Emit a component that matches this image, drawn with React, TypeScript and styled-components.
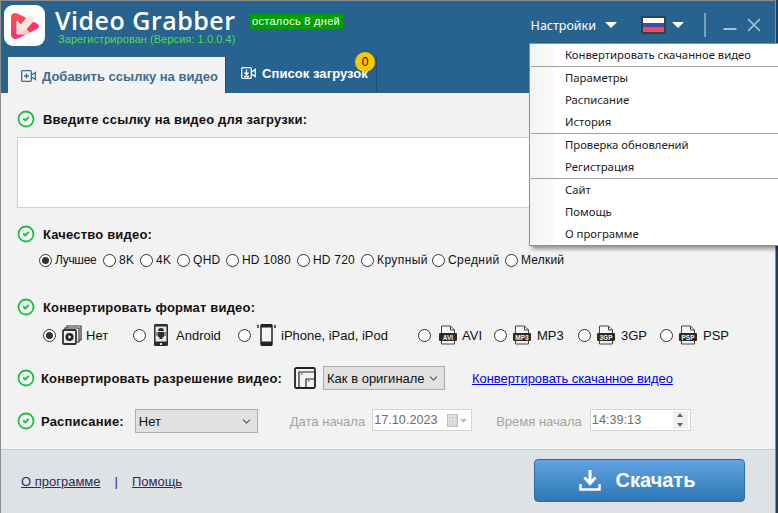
import styled, { createGlobalStyle } from 'styled-components';
import { CircleCheck, ChevronDown, Minus, X } from 'lucide-react';

const GlobalStyle = createGlobalStyle`
  html, body {
    margin: 0;
    padding: 0;
    background: #1d3f5e;
    overflow: hidden;
  }
  * {
    box-sizing: border-box;
  }
`;

const Window = styled.div`
  position: relative;
  width: 776px;
  height: 513px;
  display: flex;
  flex-direction: column;
  border-left: 1px solid #8c8c8c;
  border-right: 1px solid #8c8c8c;
  border-top: 1px solid #8c8c8c;
  font-family: "Liberation Sans", Arial, sans-serif;
  font-size: 13px;
  color: #111;
`;

const Header = styled.header`
  height: 92px;
  background: #27638e;
  display: flex;
  flex-direction: column;
`;

const TitleBar = styled.div`
  height: 56px;
  display: flex;
  padding-left: 3px;
`;

const LogoBox = styled.div`
  width: 41px;
  height: 41px;
  margin-top: 4px;
  background: #fff;
  border-radius: 9px;
  display: flex;
  align-items: center;
  justify-content: center;
`;

const Brand = styled.div`
  margin-left: 10px;
  display: flex;
  flex-direction: column;
`;

const BrandTop = styled.div`
  display: flex;
  align-items: flex-start;
`;

const AppName = styled.div`
  font-family: "Open Sans", sans-serif;
  font-weight: 600;
  font-size: 25px;
  line-height: 26px;
  height: 26px;
  margin-top: 6px;
  color: #fff;
  letter-spacing: 0.5px;
`;

const Trial = styled.div`
  margin: 13px 0 0 14px;
  height: 15px;
  width: 93px;
  background: #00a000;
  color: #fff;
  font-size: 11px;
  line-height: 15px;
  letter-spacing: 0.3px;
  text-align: center;
  white-space: nowrap;
`;

const Registered = styled.div`
  margin-left: 3px;
  font-size: 11px;
  line-height: 13px;
  color: #4fdc55;
  letter-spacing: 0.06px;
  white-space: nowrap;
`;

const WindowControls = styled.div`
  margin-left: auto;
  padding-right: 10px;
  display: flex;
  align-items: center;
  height: 48px;
  color: #fff;
`;

const SettingsLabel = styled.span`
  font-family: "Noto Sans", sans-serif;
  font-size: 12.5px;
`;

const Caret = styled.span<{ $gap: number }>`
  margin-left: ${(p) => p.$gap}px;
  width: 0;
  height: 0;
  border-left: 6px solid transparent;
  border-right: 6px solid transparent;
  border-top: 6px solid #fff;
`;

const Flag = styled.div`
  margin-left: 24px;
  width: 25px;
  height: 18px;
  border: 2px solid #33404a;
  background: linear-gradient(#fff 0 33%, #3f4ea5 33% 66%, #f4495a 66% 100%);
`;

const Divider = styled.div`
  margin: 0 14px 0 20px;
  width: 2px;
  height: 24px;
  background: #7ba3bf;
`;

const ControlIcon = styled.span<{ $gap: number; $drop: number }>`
  display: flex;
  color: #a9c4d7;
  margin-right: ${(p) => p.$gap}px;
  margin-top: ${(p) => p.$drop}px;
`;

const TabStrip = styled.div`
  height: 36px;
  padding-left: 7px;
  display: flex;
`;

const ActiveTab = styled.div`
  width: 218px;
  background: #f2f2f2;
  color: #3d6c8f;
  font-weight: 700;
  font-size: 13px;
  display: flex;
  align-items: center;
  padding: 2px 0 0 13px;
  gap: 6px;
  border-right: 1px solid #1e4f74;
  white-space: nowrap;
`;

const Tab = styled.div`
  position: relative;
  width: 151px;
  height: 36px;
  color: #fff;
  font-weight: 700;
  font-size: 13px;
  letter-spacing: 0.07px;
  display: flex;
  align-items: center;
  padding: 0 0 4px 15px;
  gap: 6px;
  border-right: 1px solid #1e4f74;
  white-space: nowrap;
`;

const CountBadge = styled.span`
  position: absolute;
  left: 129px;
  top: -5px;
  width: 20px;
  height: 20px;
  border-radius: 50%;
  background: #fdc704;
  color: #111;
  font-size: 12px;
  font-weight: 400;
  line-height: 20px;
  text-align: center;
`;

const Content = styled.main`
  flex: 1;
  background: #f2f2f2;
  padding: 16px 15px 0 16px;
  display: flex;
  flex-direction: column;
`;

const Heading = styled.div<{ $mt?: number }>`
  height: 20px;
  margin-top: ${(p) => p.$mt ?? 0}px;
  display: flex;
  align-items: center;
  gap: 8px;
  font-size: 13px;
  font-weight: 700;
  letter-spacing: 0.18px;
  color: #111;
`;

const CheckIcon = styled(CircleCheck)`
  flex: none;
  color: #1fbf3f;
`;

const LinkBox = styled.div`
  margin-top: 8px;
  height: 71px;
  background: #fff;
  border: 1px solid #cfcfcf;
`;

const QualityRow = styled.div`
  margin: 8px 0 0 22px;
  height: 16px;
  display: flex;
  align-items: center;
  font-size: 12px;
`;

const RadioLabel = styled.label<{ $w: number; $spacing: number }>`
  flex: none;
  width: ${(p) => p.$w}px;
  display: flex;
  align-items: center;
  gap: 3px;
  letter-spacing: ${(p) => p.$spacing}px;
  white-space: nowrap;
`;

const Radio = styled.span<{ $on?: boolean }>`
  flex: none;
  width: 13px;
  height: 13px;
  border-radius: 50%;
  border: 1px solid #333;
  background: #fff;
  display: flex;
  align-items: center;
  justify-content: center;
  &::after {
    content: '';
    width: 7px;
    height: 7px;
    border-radius: 50%;
    background: ${(p) => (p.$on ? '#333' : 'transparent')};
  }
`;

const FormatRow = styled.div`
  margin: 6px 0 0 26px;
  height: 24px;
  display: flex;
  align-items: center;
`;

const FormatOption = styled.label<{ $w: number }>`
  width: ${(p) => p.$w}px;
  flex: none;
  display: flex;
  align-items: center;
  white-space: nowrap;
`;

const FormatIcon = styled.span<{ $ml: number; $mr: number }>`
  display: flex;
  margin-left: ${(p) => p.$ml}px;
  margin-right: ${(p) => p.$mr}px;
`;

const Row = styled.div<{ $mt: number }>`
  margin-top: ${(p) => p.$mt}px;
  height: 24px;
  display: flex;
  align-items: center;
`;

const RowLabel = styled.span`
  margin-left: 6px;
  font-size: 13px;
  font-weight: 700;
  letter-spacing: 0.18px;
  white-space: nowrap;
`;

const SelectBox = styled.div<{ $w: number; $ml: number }>`
  width: ${(p) => p.$w}px;
  margin-left: ${(p) => p.$ml}px;
  height: 24px;
  background: #e1e1e1;
  border: 1px solid #adadad;
  padding: 0 4px 0 3px;
  display: flex;
  align-items: center;
  justify-content: space-between;
  white-space: nowrap;
`;

const BlueLink = styled.a`
  margin-left: 27px;
  color: #0000ee;
  text-decoration: underline;
  letter-spacing: -0.06px;
  white-space: nowrap;
`;

const MutedLabel = styled.span<{ $ml: number }>`
  margin-left: ${(p) => p.$ml}px;
  color: #a3a3a3;
  white-space: nowrap;
`;

const DisabledField = styled.div<{ $w: number; $ml: number }>`
  width: ${(p) => p.$w}px;
  margin-left: ${(p) => p.$ml}px;
  height: 22px;
  margin-bottom: 2px;
  background: #fff;
  border: 1px solid #d4d4d4;
  color: #6d6d6d;
  padding: 0 2px 0 1px;
  font-size: 12.7px;
  display: flex;
  align-items: center;
  justify-content: space-between;
`;

const Spinner = styled.div`
  width: 15px;
  height: 18px;
  display: flex;
  flex-direction: column;
  justify-content: space-between;
  background: #f0f0f0;
`;

const SpinArrow = styled.span<{ $up?: boolean }>`
  align-self: center;
  margin: 2px 0;
  width: 0;
  height: 0;
  border-left: 3px solid transparent;
  border-right: 3px solid transparent;
  ${(p) => (p.$up ? 'border-bottom: 4px solid #666;' : 'border-top: 4px solid #666;')}
`;

const Footer = styled.footer`
  height: 64px;
  background: #dfe2e5;
  border-top: 1px solid #c9c9c9;
  padding-left: 20px;
  display: flex;
  align-items: center;
  color: #2d2a55;
`;

const FooterLink = styled.a`
  color: #2d2a55;
  text-decoration: underline;
`;

const FooterSep = styled.span`
  margin: 0 14px;
`;

const DownloadButton = styled.button`
  margin-left: auto;
  margin-right: 30px;
  width: 211px;
  height: 43px;
  margin-top: -3px;
  padding: 0 5px 0 0;
  border: 1px solid #2a6ca6;
  border-radius: 4px;
  background: linear-gradient(#63a3e2, #2d78b5);
  color: #fff;
  font-family: "Liberation Sans", Arial, sans-serif;
  font-size: 20px;
  font-weight: 700;
  display: flex;
  align-items: center;
  justify-content: center;
  gap: 15px;
`;

const Menu = styled.div`
  position: absolute;
  left: 528px;
  top: 42px;
  width: 249px;
  background: linear-gradient(90deg, #f3f3f3 0, #fbfbfb 24px, #fff 25px);
  border: 1px solid #8f8f8f;
  border-right: none;
  box-shadow: 3px 3px 4px rgba(0, 0, 0, 0.4);
  font-family: "Noto Sans", sans-serif;
  font-size: 11.3px;
  color: #1b1b1b;
`;

const MenuItem = styled.div`
  height: 22px;
  line-height: 22px;
  padding-left: 35px;
  white-space: nowrap;
`;

const MenuSeparator = styled.div`
  height: 1px;
  margin-left: 1px;
  background: #a0a0a0;
`;

const qualities = [
  { label: 'Лучшее', width: 64, spacing: -0.3 },
  { label: '8K', width: 37, spacing: 0.3 },
  { label: '4K', width: 37, spacing: 0.3 },
  { label: 'QHD', width: 49, spacing: 0.3 },
  { label: 'HD 1080', width: 71, spacing: 0.2 },
  { label: 'HD 720', width: 64, spacing: 0.2 },
  { label: 'Крупный', width: 71, spacing: 0.4 },
  { label: 'Средний', width: 73, spacing: 0.4 },
  { label: 'Мелкий', width: 70, spacing: 0.2 },
];

const menuGroups = [
  ['Конвертировать скачанное видео'],
  ['Параметры', 'Расписание', 'История'],
  ['Проверка обновлений', 'Регистрация'],
  ['Сайт', 'Помощь', 'О программе'],
];

function Logo() {
  return (
    <svg width="28" height="27" viewBox="0 0 28 27">
      <defs>
        <linearGradient id="logoFill" x1="0" y1="0" x2="0.4" y2="1">
          <stop offset="0" stopColor="#f8584a" />
          <stop offset="1" stopColor="#fb2a7a" />
        </linearGradient>
      </defs>
      <path
        d="M0 5C0 1.500 3.500 0 6.500 1.500L26 11.500C28.700 13.200 28.700 15.500 26 17L7 26.500C3.500 28 0 26 0 22.500Z"
        fill="url(#logoFill)"
      />
      <path d="M6 9v13h13l-4-5 9-10-5-5-9 11z" fill="#ffe3de" stroke="#fff" strokeWidth="1" />
      <path d="M6 22h13l-4-5-3 2z" fill="#ffc6c0" />
    </svg>
  );
}

function AddVideoIcon({ color }: { color: string }) {
  return (
    <svg width="15" height="12" viewBox="0 0 15 12" fill="none" stroke={color} strokeWidth="1.3">
      <rect x="0.7" y="0.7" width="9.600" height="10.600" rx="1" />
      <path d="M5.500 3.500v5M3 6h5" />
      <path d="M10.500 5l3.800-2.500v7L10.500 7" />
    </svg>
  );
}

function DownloadVideoIcon({ color }: { color: string }) {
  return (
    <svg width="15" height="12" viewBox="0 0 15 12" fill="none" stroke={color} strokeWidth="1.3">
      <rect x="0.7" y="0.7" width="9.600" height="10.600" rx="1" />
      <path d="M5.500 2.500v5M3.500 5.500l2 2.200 2-2.200M3 9.500h5" />
      <path d="M10.500 5l3.800-2.500v7L10.500 7" />
    </svg>
  );
}

function StackIcon() {
  return (
    <svg width="20" height="20" viewBox="0 0 20 20" fill="none" stroke="#333">
      <path d="M5 3V1h14v14h-2M3 5V3h14v14h-2" strokeWidth="1.200" />
      <rect x="1" y="5" width="13" height="14" rx="1" fill="#eee" strokeWidth="1.800" />
      <circle cx="7.500" cy="12" r="4" fill="#222" stroke="none" />
      <path d="M6.500 10v4l3-2z" fill="#fff" stroke="none" />
    </svg>
  );
}

function AndroidIcon() {
  return (
    <svg width="14" height="22" viewBox="0 0 14 22">
      <rect x="0" y="0" width="14" height="22" rx="1.500" fill="#2b2b2b" />
      <rect x="1.500" y="2.500" width="11" height="15" fill="#e8e8e8" />
      <path d="M4 7a3 3 0 0 1 6 0zM4 8h6v5H8.500v2h-3v-2H4zM2.500 8h1v4h-1zM10.500 8h1v4h-1z" fill="#2b2b2b" />
      <rect x="6" y="19" width="2" height="2" fill="#ddd" />
    </svg>
  );
}

function IphoneIcon() {
  return (
    <svg width="21" height="22" viewBox="0 0 21 22" fill="none" stroke="#444">
      <rect x="5" y="0.500" width="11" height="21" rx="1.500" fill="#f4f4f4" stroke="#222" strokeWidth="1.500" />
      <rect x="5" y="0.500" width="11" height="3" fill="#222" stroke="none" />
      <rect x="5" y="17.500" width="11" height="4" fill="#222" stroke="none" />
      <path d="M1 1l2 1.500-2 1.500M3 1L1 2.500 3 4M18 1l2 1.500-2 1.500M20 1l-2 1.500 2 1.500" strokeWidth="0.900" />
    </svg>
  );
}

function FileIcon({ label }: { label: string }) {
  return (
    <svg width="18" height="20" viewBox="0 0 18 20">
      <path d="M2.500 1h9l4 4v14h-13z" fill="#f5f5f5" stroke="#444" />
      <path d="M11.500 1v4h4" fill="none" stroke="#444" />
      <rect x="0" y="8" width="18" height="8" rx="1" fill="#2a2a2a" />
      <text
        x="9"
        y="14.500"
        textAnchor="middle"
        fill="#f4f4f4"
        fontFamily="Liberation Sans, sans-serif"
        fontSize="6.500"
        fontWeight="700"
      >
        {label}
      </text>
    </svg>
  );
}

function ResolutionIcon() {
  return (
    <svg width="22" height="22" viewBox="0 0 22 22" fill="none" stroke="#222">
      <rect x="1" y="1" width="20" height="20" rx="1.500" strokeWidth="1.800" />
      <path d="M5 21V5h16" strokeWidth="1.200" />
      <path d="M12 21V12h9" strokeWidth="1.200" />
      <path d="M7 7h1.500M14 14h1.500" strokeWidth="1.200" />
    </svg>
  );
}

function CalendarIcon() {
  return (
    <svg width="22" height="13" viewBox="0 0 22 13" fill="none">
      <rect x="0.500" y="0.500" width="10" height="12" fill="#eee" stroke="#bbb" />
      <path d="M3 1v11M6 1v11M9 1v11M1 4h9M1 7h9M1 10h9" stroke="#ccc" />
      <path d="M13 5h7l-3.500 4z" fill="#bbb" />
    </svg>
  );
}

function SaveIcon() {
  return (
    <svg width="22" height="22" viewBox="0 0 22 22" fill="none" stroke="#fff" strokeWidth="3">
      <path d="M11 1v12M5.500 8.500l5.500 6 5.500-6" />
      <path d="M1.500 15v5.500h19V15" strokeWidth="2.500" />
    </svg>
  );
}

export default function App() {
  return (
    <>
      <GlobalStyle />
      <Window>
        <Header>
          <TitleBar>
            <LogoBox>
              <Logo />
            </LogoBox>
            <Brand>
              <BrandTop>
                <AppName>Video Grabber</AppName>
                <Trial>осталось 8 дней</Trial>
              </BrandTop>
              <Registered>Зарегистрирован (Версия: 1.0.0.4)</Registered>
            </Brand>
            <WindowControls>
              <SettingsLabel>Настройки</SettingsLabel>
              <Caret $gap={9} />
              <Flag />
              <Caret $gap={6} />
              <Divider />
              <ControlIcon $gap={3} $drop={7}>
                <Minus size={20} strokeWidth={2.2} />
              </ControlIcon>
              <ControlIcon $gap={0} $drop={0}>
                <X size={22} strokeWidth={1.8} />
              </ControlIcon>
            </WindowControls>
          </TitleBar>
          <TabStrip>
            <ActiveTab>
              <AddVideoIcon color="#3d6c8f" />
              Добавить ссылку на видео
            </ActiveTab>
            <Tab>
              <DownloadVideoIcon color="#fff" />
              Список загрузок
              <CountBadge>0</CountBadge>
            </Tab>
          </TabStrip>
        </Header>

        <Content>
          <Heading>
            <CheckIcon size={18} strokeWidth={2.4} />
            Введите ссылку на видео для загрузки:
          </Heading>
          <LinkBox />

          <Heading $mt={16}>
            <CheckIcon size={18} strokeWidth={2.4} />
            Качество видео:
          </Heading>
          <QualityRow>
            {qualities.map((q, i) => (
              <RadioLabel key={q.label} $w={q.width} $spacing={q.spacing}>
                <Radio $on={i === 0} />
                {q.label}
              </RadioLabel>
            ))}
          </QualityRow>

          <Heading $mt={29}>
            <CheckIcon size={18} strokeWidth={2.4} />
            Конвертировать формат видео:
          </Heading>
          <FormatRow>
            <FormatOption $w={90}>
              <Radio $on />
              <FormatIcon $ml={6} $mr={4}>
                <StackIcon />
              </FormatIcon>
              Нет
            </FormatOption>
            <FormatOption $w={105}>
              <Radio />
              <FormatIcon $ml={8} $mr={8}>
                <AndroidIcon />
              </FormatIcon>
              Android
            </FormatOption>
            <FormatOption $w={180}>
              <Radio />
              <FormatIcon $ml={5} $mr={4}>
                <IphoneIcon />
              </FormatIcon>
              iPhone, iPad, iPod
            </FormatOption>
            <FormatOption $w={76}>
              <Radio />
              <FormatIcon $ml={8} $mr={5}>
                <FileIcon label="AVI" />
              </FormatIcon>
              AVI
            </FormatOption>
            <FormatOption $w={84}>
              <Radio />
              <FormatIcon $ml={6} $mr={6}>
                <FileIcon label="MP3" />
              </FormatIcon>
              MP3
            </FormatOption>
            <FormatOption $w={82}>
              <Radio />
              <FormatIcon $ml={6} $mr={6}>
                <FileIcon label="3GP" />
              </FormatIcon>
              3GP
            </FormatOption>
            <FormatOption $w={80}>
              <Radio />
              <FormatIcon $ml={6} $mr={6}>
                <FileIcon label="PSP" />
              </FormatIcon>
              PSP
            </FormatOption>
          </FormatRow>

          <Row $mt={19}>
            <CheckIcon size={18} strokeWidth={2.4} />
            <RowLabel>Конвертировать разрешение видео:</RowLabel>
            <FormatIcon $ml={12} $mr={0}>
              <ResolutionIcon />
            </FormatIcon>
            <SelectBox $w={122} $ml={7}>
              Как в оригинале
              <ChevronDown size={13} color="#555" />
            </SelectBox>
            <BlueLink>Конвертировать скачанное видео</BlueLink>
          </Row>

          <Row $mt={19}>
            <CheckIcon size={18} strokeWidth={2.4} />
            <RowLabel>Расписание:</RowLabel>
            <SelectBox $w={123} $ml={11}>
              Нет
              <ChevronDown size={13} color="#555" />
            </SelectBox>
            <MutedLabel $ml={32}>Дата начала</MutedLabel>
            <DisabledField $w={100} $ml={7}>
              17.10.2023
              <CalendarIcon />
            </DisabledField>
            <MutedLabel $ml={24}>Время начала</MutedLabel>
            <DisabledField $w={101} $ml={8}>
              14:39:13
              <Spinner>
                <SpinArrow $up />
                <SpinArrow />
              </Spinner>
            </DisabledField>
          </Row>
        </Content>

        <Footer>
          <FooterLink>О программе</FooterLink>
          <FooterSep>|</FooterSep>
          <FooterLink>Помощь</FooterLink>
          <DownloadButton>
            <SaveIcon />
            Скачать
          </DownloadButton>
        </Footer>

        <Menu>
          {menuGroups.map((group, i) => (
            <div key={group[0]}>
              {i > 0 && <MenuSeparator />}
              {group.map((item) => (
                <MenuItem key={item}>{item}</MenuItem>
              ))}
            </div>
          ))}
        </Menu>
      </Window>
    </>
  );
}
